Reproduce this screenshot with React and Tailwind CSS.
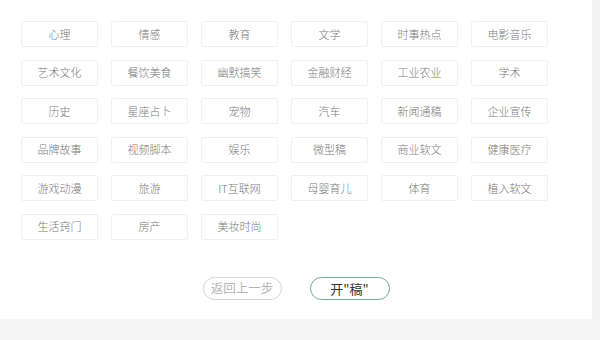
const tags = [
  '心理', '情感', '教育', '文学', '时事热点', '电影音乐',
  '艺术文化', '餐饮美食', '幽默搞笑', '金融财经', '工业农业', '学术',
  '历史', '星座占卜', '宠物', '汽车', '新闻通稿', '企业宣传',
  '品牌故事', '视频脚本', '娱乐', '微型稿', '商业软文', '健康医疗',
  '游戏动漫', '旅游', 'IT互联网', '母婴育儿', '体育', '植入软文',
  '生活窍门', '房产', '美妆时尚',
]

export default function App() {
  return (
    <div
      className="w-[600px] h-[340px] flex flex-col bg-[#f5f5f5] overflow-hidden"
      style={{ fontFamily: '"Noto Sans CJK SC", "Noto Sans", sans-serif' }}
    >
      <div className="flex h-[319px]">
        <div className="w-[592px] bg-white flex flex-col">
          {/* Category tags */}
          <div className="pt-[21px] pl-[21px] grid grid-cols-[repeat(6,77px)] gap-x-[13px] gap-y-[12.6px]">
            {tags.map((t) => (
              <div
                key={t}
                className="h-[26px] flex items-center justify-center border border-[#f0f0f0] rounded-[2px] text-[11px] text-[#7a7a7a] font-light leading-none"
              >
                {t}
              </div>
            ))}
          </div>

          {/* Actions */}
          <div className="mt-[37px] flex justify-center gap-[28px]">
            <button className="w-[79px] h-[23px] rounded-full border border-[#d4d4d4] text-[12.5px] text-[#b4b4b4] leading-none flex items-center justify-center">
              返回上一步
            </button>
            <button className="w-[80px] h-[23px] rounded-full border border-[#79a898] text-[13px] text-[#333] leading-none flex items-center justify-center">
              开"稿"
            </button>
          </div>
        </div>
        <div className="flex-1 bg-[#f4f4f4]" />
      </div>
      <div className="flex-1 bg-[#f5f5f5]" />
    </div>
  )
}
